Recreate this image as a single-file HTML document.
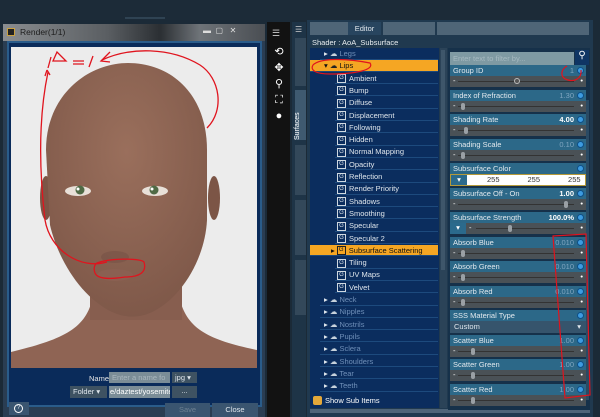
<!DOCTYPE html>
<html><head><meta charset="utf-8"><style>
*{margin:0;padding:0;box-sizing:border-box}
body{width:600px;height:417px;overflow:hidden;background:#1b2a37;font-family:"Liberation Sans",sans-serif;font-size:7.5px;color:#dfe6ec;position:relative}
.a{position:absolute}
.row{position:absolute;height:11.5px;background:#0b2d5e;border-bottom:1px solid #1d4a7d;line-height:11px;white-space:nowrap}
.g{display:inline-block;width:9px;height:9px;border:1px solid #cfd8e0;vertical-align:middle;margin:0 3px 0 2px;font-size:6px;line-height:7px;text-align:center}
.ph{position:absolute;left:450px;width:136px;height:11px;background:#2c6888;line-height:11px;padding-left:3px;color:#e2e9ee}
.ph b{position:absolute;right:12px;font-weight:normal;color:#7fa5c0}
.ph i{position:absolute;right:2px;top:2px;width:7px;height:7px;border-radius:50%;background:#3d9be0;border:1.5px solid #0d4f88}
.sl{position:absolute;left:450px;width:136px;height:11px;background:#4a5156;line-height:10px;color:#fff}
.sl .m{position:absolute;left:3px}
.sl .p{position:absolute;right:3px}
.sl .k{position:absolute;top:2px;width:4px;height:7px;background:#9aa0a5;border-radius:2px}
</style></head><body>
<div class="a" style="left:0;top:0;width:600px;height:20px;background:#1c2b38"></div>
<div class="a" style="left:125px;top:17px;width:40px;height:2px;background:#2f4353"></div>

<div class="a" style="left:3px;top:24px;width:262px;height:393px;background:#2a3d52"></div>
<div class="a" style="left:3px;top:24px;width:262px;height:17px;background:linear-gradient(90deg,#8a8d90,#5a5e62 40%,#2b2f33 60%,#6e7378 75%,#4a4e53)"></div>
<div class="a" style="left:7px;top:28px;width:8px;height:8px;background:#222;border:1px solid #c9a040"></div>
<div class="a" style="left:20px;top:27px;color:#1d1d1d;font-size:8.5px">Render(1/1)</div>
<div class="a" style="left:203px;top:26px;color:#ddd;font-size:8px">▬ &nbsp;▢ &nbsp;&nbsp;✕</div>
<div class="a" style="left:7px;top:41px;width:255px;height:366px;background:#0a2b5a;border:2px solid #2a5c8a"></div>
<div class="a" style="left:11px;top:47px;width:246px;height:321px;background:#ececec;overflow:hidden">
<svg width="246" height="321" viewBox="11 47 246 321">
<defs><radialGradient id="sk" cx="0.5" cy="0.35" r="0.7"><stop offset="0" stop-color="#9a6f5c"/><stop offset="1" stop-color="#7d5748"/></radialGradient></defs>
<path d="M11 352 C60 340 85 330 92 300 L180 300 C188 330 210 340 257 350 L257 368 L11 368Z" fill="#8f6454"/>
<rect x="90" y="270" width="92" height="50" fill="#875e4f"/>
<ellipse cx="46" cy="198" rx="6" ry="22" fill="#7c5546"/>
<ellipse cx="214" cy="198" rx="6" ry="22" fill="#7c5546"/>
<path d="M46 150 C46 95 88 63 128 63 C172 63 207 95 207 150 L207 220 C205 260 180 300 150 313 C138 318 125 318 112 312 C82 298 58 260 50 225 Z" fill="url(#sk)"/>
<ellipse cx="78" cy="191" rx="13" ry="5" fill="#e8e0d8"/><circle cx="80" cy="190" r="4.5" fill="#4f6a45"/><circle cx="78" cy="189" r="1.5" fill="#fff"/>
<ellipse cx="155" cy="191" rx="13" ry="5" fill="#e8e0d8"/><circle cx="154" cy="190" r="4.5" fill="#4f6a45"/><circle cx="152" cy="189" r="1.5" fill="#fff"/>
<ellipse cx="115" cy="257" rx="14" ry="6" fill="#6f4c40" opacity=".4"/>
<ellipse cx="115" cy="275" rx="18" ry="6" fill="#8a6052"/>
<g fill="none" stroke="#e0141e" stroke-width="1.3">
<path d="M51 57 L48 68 M53 61 L66 61 L57 52 Z M73 61 L84 61 M73 64 L84 64 M93 56 L89 67 M110 52 L101 61 L110 62"/>
<path d="M102 60 C130 47 170 47 200 65 C220 78 225 110 207 128"/>
<path d="M48 72 C40 110 38 160 45 220 C50 250 80 270 107 262"/>
<path d="M47 70 L45 76 M47 70 L50 75"/>
<path d="M97 263 C110 258 140 258 144 262 C147 272 140 277 125 277 C112 279 98 280 95 273 C93 268 95 264 97 263Z"/>
</g>
</svg></div>
<div class="a" style="left:89px;top:374px;color:#e5e5e5">Name :</div>
<div class="a" style="left:109px;top:372px;width:61px;height:11px;background:#7b8d97;color:#a9b6bd;padding-left:3px;line-height:11px">Enter a name fo</div>
<div class="a" style="left:172px;top:372px;width:25px;height:11px;background:#3e5262;line-height:11px;padding-left:3px">jpg ▾</div>
<div class="a" style="left:70px;top:386px;width:37px;height:12px;background:#3e5262;line-height:12px;padding-left:3px">Folder ▾</div>
<div class="a" style="left:109px;top:386px;width:61px;height:12px;background:#7b8d97;color:#fff;line-height:12px;padding-left:1px;overflow:hidden;white-space:nowrap">e/daztest/yosemite</div>
<div class="a" style="left:172px;top:386px;width:25px;height:12px;background:#3e5262;text-align:center;line-height:10px">...</div>
<div class="a" style="left:9px;top:402px;width:20px;height:13px;background:#3a5570"></div>
<div class="a" style="left:14px;top:404px;width:9px;height:9px;border:1px solid #fff;border-radius:50%;font-size:6px;text-align:center;line-height:7px">?</div>
<div class="a" style="left:165px;top:403px;width:45px;height:14px;background:#3a5570;color:#6d8092;text-align:center;line-height:14px">Save</div>
<div class="a" style="left:212px;top:403px;width:46px;height:14px;background:#3a5570;text-align:center;line-height:14px">Close</div>

<div class="a" style="left:267px;top:22px;width:23px;height:395px;background:#121212"></div>
<div class="a" style="left:272px;top:28px;color:#ccc;font-size:9px">☰</div>
<div class="a" style="left:273px;top:44px;color:#fff;font-size:11px;line-height:16px;text-align:center;width:12px">⟲<br>✥<br>⚲<br>⛶<br>●</div>

<div class="a" style="left:292px;top:22px;width:14px;height:395px;background:#1e3447"></div>
<div class="a" style="left:295px;top:25px;color:#ccc;font-size:8px">☰</div>
<div class="a" style="left:295px;top:38px;width:11px;height:48px;background:#33485a"></div>
<div class="a" style="left:295px;top:90px;width:11px;height:50px;background:#3f5a70"></div>
<div class="a" style="left:294px;font-size:7px;color:#fff;transform:rotate(-90deg);transform-origin:left top;top:140px">Surfaces</div>
<div class="a" style="left:295px;top:145px;width:11px;height:50px;background:#33485a"></div>
<div class="a" style="left:295px;top:200px;width:11px;height:55px;background:#33485a"></div>
<div class="a" style="left:295px;top:260px;width:11px;height:55px;background:#33485a"></div>

<div class="a" style="left:307px;top:20px;width:286px;height:397px;background:#20394f"></div>
<div class="a" style="left:310px;top:22px;width:38px;height:13px;background:#4f6577"></div>
<div class="a" style="left:348px;top:22px;width:33px;height:13px;background:#28455f;text-align:center;line-height:13px">Editor</div>
<div class="a" style="left:383px;top:22px;width:52px;height:13px;background:#4f6577"></div>
<div class="a" style="left:437px;top:22px;width:152px;height:13px;background:#4f6577"></div>
<div class="a" style="left:312px;top:38px;color:#e8edf0">Shader : AoA_Subsurface</div>
<div class="a" style="left:310px;top:48px;width:129px;height:346px;background:#0b2d5e"></div>
<div class="a" style="left:440px;top:48px;width:7px;height:360px;background:#2b4358"></div>
<div class="a" style="left:441px;top:50px;width:4px;height:220px;background:#3e566a"></div>

<div id="tree"></div>
<div class="a" style="left:310px;top:394px;width:129px;height:14px;background:#0b2d5e"></div>
<div class="a" style="left:313px;top:396px;width:9px;height:9px;background:#e4a83a;border-radius:2px"></div>
<div class="a" style="left:325px;top:396px;color:#fff">Show Sub Items</div>
<div class="a" style="left:310px;top:409px;width:280px;height:4px;background:#4e6478"></div>

<div class="a" style="left:448px;top:48px;width:142px;height:362px;background:#16314a"></div>
<div class="a" style="left:450px;top:52px;width:124px;height:13px;background:#7f9aa3;color:#a6b9c0;line-height:13px;padding-left:3px">Enter text to filter by...</div>
<div class="a" style="left:575px;top:50px;width:14px;height:15px;background:#0f3564;color:#fff;font-size:10px;text-align:center">⚲</div>
<div id="props"></div>
<div class="a" style="left:586px;top:100px;width:3px;height:300px;background:#2a4a63"></div>
<svg class="a" style="left:300px;top:40px" width="300" height="377" viewBox="300 40 300 377">
<g fill="none" stroke="#e0141e" stroke-width="1.2">
<path d="M567 66 C560 70 560 78 568 80 C575 82 582 78 581 70"/>
<path d="M553 236 L586 234 L590 395 L565 398 Z"/>
<path d="M313 65 C320 58 345 58 370 63 C375 70 355 74 330 74 C315 74 310 70 313 65Z"/>
</g></svg>
<script>
var t=["Legs","Lips","Ambient","Bump","Diffuse","Displacement","Following","Hidden","Normal Mapping","Opacity","Reflection","Render Priority","Shadows","Smoothing","Specular","Specular 2","Subsurface Scattering","Tiling","UV Maps","Velvet","Neck","Nipples","Nostrils","Pupils","Sclera","Shoulders","Tear","Teeth"];
var h="";
t.forEach(function(n,i){var y=48+12.3*i;var parent=(i<2||i>19);var sel=(i==1||i==16);
var left=parent?320:335;
h+='<div class="row" style="left:'+(sel?310:left)+'px;top:'+y+'px;width:'+(438-(sel?310:left))+'px;'+(sel?'background:#f5a623;color:#111;':'')+'">';
if(parent){h+='<span style="color:'+(sel?'#111':'#dfe6ec')+';padding-left:'+(sel?14:4)+'px">'+(i==1?'▾':'▸')+'</span> <span style="color:'+(sel?'#222':'#c8d3dc')+'">☁</span> <span style="color:'+(sel?'#111':'#6f8fb8')+'">'+n+'</span>';}
else{h+=(sel?'<span style="padding-left:21px">▸</span>':'')+'<span class="g" style="'+(sel?'border-color:#222':'')+'">G</span>'+n;}
h+='</div>';});
document.getElementById('tree').innerHTML=h;
var p=[["Group ID","1",0,50],["Index of Refraction","1.30",0,3],["Shading Rate","4.00",1,5],["Shading Scale","0.10",0,3],["Subsurface Color","",2],["Subsurface Off - On","1.00",1,95],["Subsurface Strength","100.0%",3,45],["Absorb Blue","0.010",0,3],["Absorb Green","0.010",0,3],["Absorb Red","0.010",0,3],["SSS Material Type","",4],["Scatter Blue","1.00",0,12],["Scatter Green","1.00",0,12],["Scatter Red","1.00",0,12]];
var ys=[65,90,114,139,163,188,212,237,261,286,310,335,359,384];var s="";
p.forEach(function(q,i){var y=ys[i];
s+='<div class="ph" style="top:'+y+'px">'+q[0]+'<b style="'+(q[2]==1||q[2]==3?'color:#fff;font-weight:bold':'')+'">'+q[1]+'</b><i></i></div>';
var y2=y+11;
if(q[2]==2){s+='<div class="a" style="left:450px;top:'+y2+'px;width:136px;height:12px;background:#fff;border:1px solid #b59a3a;color:#333;line-height:10px"><span style="display:inline-block;width:16px;height:10px;background:#2b6a8c;color:#fff;text-align:center">▾</span><span style="margin-left:20px">255</span><span style="margin-left:28px">255</span><span style="margin-left:28px">255</span></div>';}
else if(q[2]==4){s+='<div class="a" style="left:450px;top:'+y2+'px;width:136px;height:12px;background:#36546c;line-height:12px;padding-left:4px">Custom<span style="position:absolute;right:5px">▾</span></div>';}
else{s+='<div class="sl" style="top:'+y2+'px">'+(q[2]==3?'<span style="position:absolute;left:0;width:16px;height:11px;background:#2b6a8c;text-align:center">▾</span><span class="m" style="left:19px">-</span>':'<span class="m">-</span>')+'<span class="a" style="left:'+(q[2]==3?26:8)+'px;right:12px;top:5px;height:1px;background:#333"></span><span class="k" style="left:'+(8+q[3]*1.12)+'px'+(i==0?';border-radius:50%;width:6px;height:6px;top:2px;border:1px solid #bbb;background:#555':'')+'"></span><span class="p">•</span></div>';}
});
document.getElementById('props').innerHTML=s;
</script>
</body></html>
